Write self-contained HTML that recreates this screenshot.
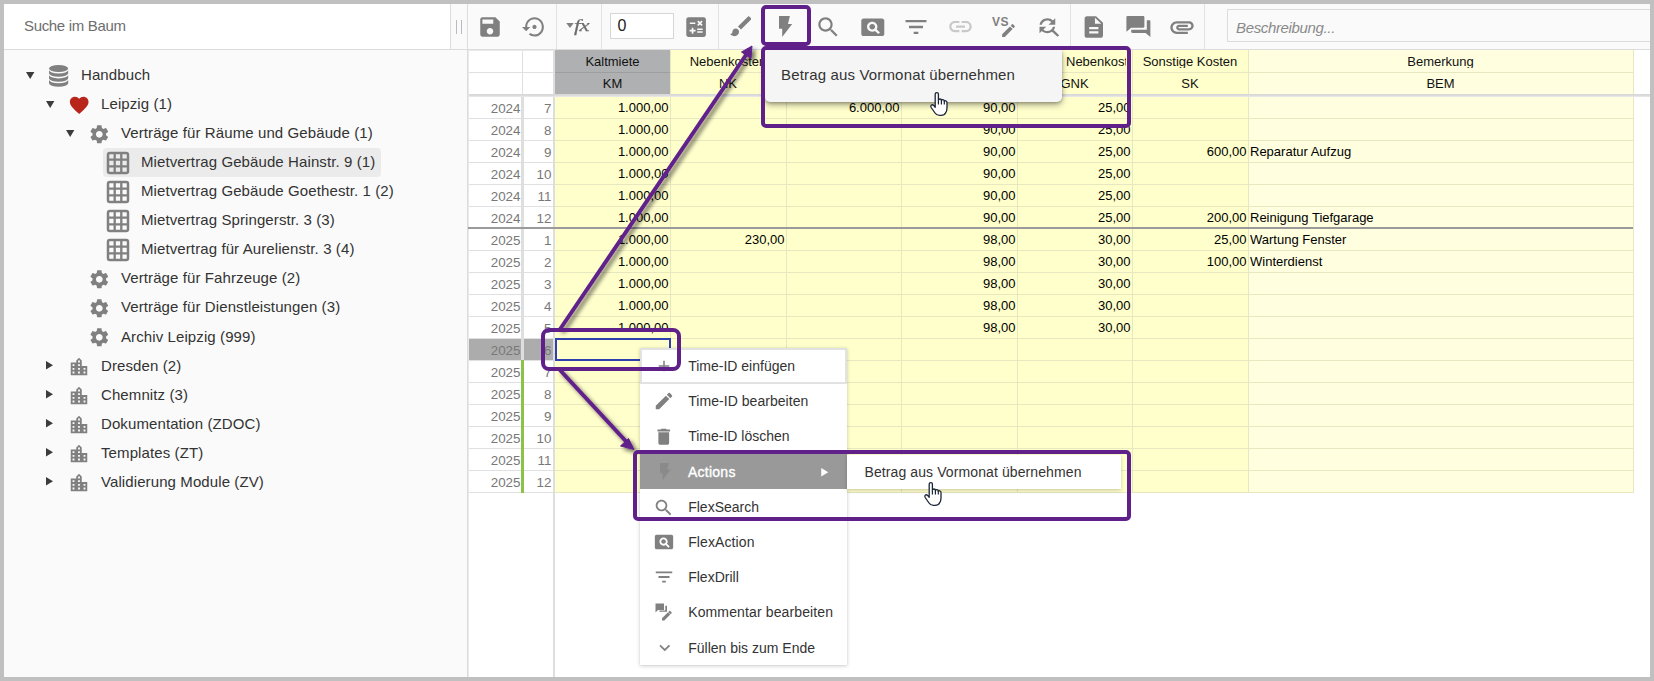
<!DOCTYPE html>
<html lang="de"><head><meta charset="utf-8"><title>Handbuch</title>
<style>
html,body{margin:0;padding:0}
body{width:1654px;height:681px;background:#c0c0c0;position:relative;overflow:hidden;font-family:"Liberation Sans",Arial,sans-serif;}
.abs,.ic,.t,.ln{position:absolute}
.ic{display:block;overflow:visible}
.t{white-space:nowrap;line-height:1}
.tree{font-size:15px;color:#333;letter-spacing:0.1px}
  .rh{font-size:13.400px;color:#787878;text-align:right}
.gh{font-size:13px;color:#111;text-align:center;overflow:hidden}
.gc{font-size:13px;color:#000}
.mi{font-size:14px;color:#333;letter-spacing:0px}
</style></head><body>

<div class="abs" style="left:4px;top:4px;width:1646px;height:673px;background:#fff"></div>
<div class="abs" style="left:4px;top:50px;width:463px;height:627px;background:#fafafa"></div>
<div class="abs" style="left:451px;top:4px;width:1199px;height:45px;background:#fafafa"></div>
<div class="ln" style="left:4px;top:49px;width:1646px;height:1px;background:#dcdcdc"></div>
<div class="ln" style="left:450px;top:4px;width:1px;height:45px;background:#dcdcdc"></div>
<div class="ln" style="left:467px;top:4px;width:1px;height:673px;background:#dcdcdc"></div>
<div class="ln" style="left:456px;top:20px;width:1px;height:14px;background:#b9b9c4"></div>
<div class="ln" style="left:461px;top:20px;width:1px;height:14px;background:#b9b9c4"></div>
<div class="t" style="left:24px;top:18px;font-size:15px;color:#6e6e6e;letter-spacing:-0.33px">Suche im Baum</div>
<svg class="ic" style="left:25.7px;top:71.70px" width="8.400" height="7" viewBox="0 0 12 10"><path d="M0 0h12L6 10z" fill="#3c3c3c"/></svg>
<svg class="ic" style="left:49.40px;top:64.80px" width="19.200" height="22" viewBox="0 0 19.200 22"><ellipse cx="9.600" cy="3.500" rx="9.600" ry="3.500" fill="#808080"/><path fill="#808080" d="M0 5.0A9.600 3.500 0 0 0 19.200 5.0L19.200 8.3A9.600 3.500 0 0 1 0 8.3Z"/><path fill="#808080" d="M0 9.9A9.600 3.500 0 0 0 19.200 9.9L19.200 13.2A9.600 3.500 0 0 1 0 13.2Z"/><path fill="#808080" d="M0 14.8A9.600 3.500 0 0 0 19.200 14.8L19.200 18.3A9.600 3.500 0 0 1 0 18.3Z"/></svg>
<div class="t tree" style="left:81.0px;top:66.90px">Handbuch</div>
<svg class="ic" style="left:45.7px;top:100.77px" width="8.400" height="7" viewBox="0 0 12 10"><path d="M0 0h12L6 10z" fill="#3c3c3c"/></svg>
<svg class="ic" style="left:67.80px;top:93.67px" width="22.4" height="22.4" viewBox="0 0 24 24"><path fill="#b8261b" d="M12 21.350l-1.450-1.320C5.400 15.360 2 12.280 2 8.500 2 5.420 4.420 3 7.500 3c1.740 0 3.410.81 4.500 2.090C13.090 3.810 14.760 3 16.500 3 19.580 3 22 5.420 22 8.500c0 3.780-3.400 6.860-8.550 11.540L12 21.350z"/></svg>
<div class="t tree" style="left:101.0px;top:95.97px">Leipzig (1)</div>
<svg class="ic" style="left:65.7px;top:129.84px" width="8.400" height="7" viewBox="0 0 12 10"><path d="M0 0h12L6 10z" fill="#3c3c3c"/></svg>
<svg class="ic" style="left:87.70px;top:122.64px" width="22.6" height="22.6" viewBox="0 0 24 24"><path fill="#808080" d="M19.140 12.940c.04-.3.06-.61.06-.94 0-.32-.02-.64-.07-.94l2.030-1.580c.18-.14.23-.41.12-.61l-1.920-3.320c-.12-.22-.37-.29-.59-.22l-2.390.96c-.5-.38-1.030-.7-1.620-.94l-.36-2.540c-.04-.24-.24-.41-.48-.41h-3.840c-.24 0-.43.17-.47.41l-.36 2.540c-.59.24-1.130.57-1.620.94l-2.390-.96c-.22-.08-.47 0-.59.22L2.740 8.870c-.12.21-.08.47.12.61l2.030 1.580c-.05.3-.09.63-.09.94s.02.64.07.94l-2.030 1.580c-.18.14-.23.41-.12.61l1.920 3.320c.12.22.37.29.59.22l2.390-.96c.5.38 1.030.7 1.620.94l.36 2.540c.05.24.24.41.48.41h3.840c.24 0 .44-.17.47-.41l.36-2.540c.59-.24 1.130-.56 1.620-.94l2.390.96c.22.08.47 0 .59-.22l1.920-3.320c.12-.22.07-.47-.12-.61l-2.010-1.580zM12 15.600c-1.980 0-3.600-1.620-3.600-3.600s1.620-3.600 3.600-3.600 3.600 1.620 3.600 3.600-1.620 3.600-3.600 3.600z"/></svg>
<div class="t tree" style="left:121.0px;top:125.04px">Verträge für Räume und Gebäude (1)</div>
<div class="abs" style="left:103px;top:148.11px;width:278px;height:28.600px;background:#ebebeb;border-radius:4px"></div>
<svg class="ic" style="left:107.00px;top:152.01px" width="22" height="22" viewBox="0 0 22 22"><rect x="1" y="1" width="20" height="20" rx="1.800" fill="none" stroke="#808080" stroke-width="2.500"/><path d="M7.700 1v20M14.300 1v20M1 7.700h20M1 14.300h20" stroke="#808080" stroke-width="2.300" fill="none"/></svg>
<div class="t tree" style="left:141.0px;top:154.11px">Mietvertrag Gebäude Hainstr. 9 (1)</div>
<svg class="ic" style="left:107.00px;top:181.08px" width="22" height="22" viewBox="0 0 22 22"><rect x="1" y="1" width="20" height="20" rx="1.800" fill="none" stroke="#808080" stroke-width="2.500"/><path d="M7.700 1v20M14.300 1v20M1 7.700h20M1 14.300h20" stroke="#808080" stroke-width="2.300" fill="none"/></svg>
<div class="t tree" style="left:141.0px;top:183.18px">Mietvertrag Gebäude Goethestr. 1 (2)</div>
<svg class="ic" style="left:107.00px;top:210.15px" width="22" height="22" viewBox="0 0 22 22"><rect x="1" y="1" width="20" height="20" rx="1.800" fill="none" stroke="#808080" stroke-width="2.500"/><path d="M7.700 1v20M14.300 1v20M1 7.700h20M1 14.300h20" stroke="#808080" stroke-width="2.300" fill="none"/></svg>
<div class="t tree" style="left:141.0px;top:212.25px">Mietvertrag Springerstr. 3 (3)</div>
<svg class="ic" style="left:107.00px;top:239.22px" width="22" height="22" viewBox="0 0 22 22"><rect x="1" y="1" width="20" height="20" rx="1.800" fill="none" stroke="#808080" stroke-width="2.500"/><path d="M7.700 1v20M14.300 1v20M1 7.700h20M1 14.300h20" stroke="#808080" stroke-width="2.300" fill="none"/></svg>
<div class="t tree" style="left:141.0px;top:241.32px">Mietvertrag für Aurelienstr. 3 (4)</div>
<svg class="ic" style="left:87.70px;top:267.99px" width="22.6" height="22.6" viewBox="0 0 24 24"><path fill="#808080" d="M19.140 12.940c.04-.3.06-.61.06-.94 0-.32-.02-.64-.07-.94l2.030-1.580c.18-.14.23-.41.12-.61l-1.920-3.320c-.12-.22-.37-.29-.59-.22l-2.390.96c-.5-.38-1.030-.7-1.620-.94l-.36-2.540c-.04-.24-.24-.41-.48-.41h-3.840c-.24 0-.43.17-.47.41l-.36 2.540c-.59.24-1.130.57-1.620.94l-2.390-.96c-.22-.08-.47 0-.59.22L2.740 8.870c-.12.21-.08.47.12.61l2.030 1.580c-.05.3-.09.63-.09.94s.02.64.07.94l-2.030 1.580c-.18.14-.23.41-.12.61l1.920 3.320c.12.22.37.29.59.22l2.390-.96c.5.38 1.030.7 1.620.94l.36 2.540c.05.24.24.41.48.41h3.840c.24 0 .44-.17.47-.41l.36-2.540c.59-.24 1.130-.56 1.620-.94l2.390.96c.22.08.47 0 .59-.22l1.920-3.320c.12-.22.07-.47-.12-.61l-2.010-1.580zM12 15.600c-1.980 0-3.600-1.620-3.600-3.600s1.620-3.600 3.600-3.600 3.600 1.620 3.600 3.600-1.620 3.600-3.600 3.600z"/></svg>
<div class="t tree" style="left:121.0px;top:270.39px">Verträge für Fahrzeuge (2)</div>
<svg class="ic" style="left:87.70px;top:297.06px" width="22.6" height="22.6" viewBox="0 0 24 24"><path fill="#808080" d="M19.140 12.940c.04-.3.06-.61.06-.94 0-.32-.02-.64-.07-.94l2.030-1.580c.18-.14.23-.41.12-.61l-1.920-3.320c-.12-.22-.37-.29-.59-.22l-2.390.96c-.5-.38-1.030-.7-1.620-.94l-.36-2.540c-.04-.24-.24-.41-.48-.41h-3.840c-.24 0-.43.17-.47.41l-.36 2.540c-.59.24-1.130.57-1.620.94l-2.390-.96c-.22-.08-.47 0-.59.22L2.740 8.870c-.12.21-.08.47.12.61l2.030 1.580c-.05.3-.09.63-.09.94s.02.64.07.94l-2.030 1.580c-.18.14-.23.41-.12.61l1.920 3.320c.12.22.37.29.59.22l2.390-.96c.5.38 1.030.7 1.620.94l.36 2.540c.05.24.24.41.48.41h3.840c.24 0 .44-.17.47-.41l.36-2.540c.59-.24 1.130-.56 1.620-.94l2.390.96c.22.08.47 0 .59-.22l1.920-3.320c.12-.22.07-.47-.12-.61l-2.010-1.580zM12 15.600c-1.980 0-3.600-1.620-3.600-3.600s1.620-3.600 3.600-3.600 3.600 1.620 3.600 3.600-1.620 3.600-3.600 3.600z"/></svg>
<div class="t tree" style="left:121.0px;top:299.46px">Verträge für Dienstleistungen (3)</div>
<svg class="ic" style="left:87.70px;top:326.13px" width="22.6" height="22.6" viewBox="0 0 24 24"><path fill="#808080" d="M19.140 12.940c.04-.3.06-.61.06-.94 0-.32-.02-.64-.07-.94l2.030-1.580c.18-.14.23-.41.12-.61l-1.920-3.320c-.12-.22-.37-.29-.59-.22l-2.390.96c-.5-.38-1.030-.7-1.620-.94l-.36-2.540c-.04-.24-.24-.41-.48-.41h-3.840c-.24 0-.43.17-.47.41l-.36 2.540c-.59.24-1.130.57-1.620.94l-2.390-.96c-.22-.08-.47 0-.59.22L2.740 8.870c-.12.21-.08.47.12.61l2.030 1.580c-.05.3-.09.63-.09.94s.02.64.07.94l-2.030 1.580c-.18.14-.23.41-.12.61l1.920 3.320c.12.22.37.29.59.22l2.390-.96c.5.38 1.030.7 1.620.94l.36 2.540c.05.24.24.41.48.41h3.840c.24 0 .44-.17.47-.41l.36-2.540c.59-.24 1.130-.56 1.620-.94l2.390.96c.22.08.47 0 .59-.22l1.920-3.320c.12-.22.07-.47-.12-.61l-2.010-1.580zM12 15.600c-1.980 0-3.600-1.620-3.600-3.600s1.620-3.600 3.600-3.600 3.600 1.620 3.600 3.600-1.620 3.600-3.600 3.600z"/></svg>
<div class="t tree" style="left:121.0px;top:328.53px">Archiv Leipzig (999)</div>
<svg class="ic" style="left:46.2px;top:361.20px" width="7" height="8.400" viewBox="0 0 10 12"><path d="M0 0v12L10 6z" fill="#3c3c3c"/></svg>
<svg class="ic" style="left:68.00px;top:355.50px" width="22" height="22" viewBox="0 0 24 24"><path fill="#808080" d="M15 11V5l-3-3-3 3v2H3v14h18V11h-6zm-8 8H5v-2h2v2zm0-4H5v-2h2v2zm0-4H5V9h2v2zm6 8h-2v-2h2v2zm0-4h-2v-2h2v2zm0-4h-2V9h2v2zm0-4h-2V5h2v2zm6 12h-2v-2h2v2zm0-4h-2v-2h2v2z"/></svg>
<div class="t tree" style="left:101.0px;top:357.60px">Dresden (2)</div>
<svg class="ic" style="left:46.2px;top:390.27px" width="7" height="8.400" viewBox="0 0 10 12"><path d="M0 0v12L10 6z" fill="#3c3c3c"/></svg>
<svg class="ic" style="left:68.00px;top:384.57px" width="22" height="22" viewBox="0 0 24 24"><path fill="#808080" d="M15 11V5l-3-3-3 3v2H3v14h18V11h-6zm-8 8H5v-2h2v2zm0-4H5v-2h2v2zm0-4H5V9h2v2zm6 8h-2v-2h2v2zm0-4h-2v-2h2v2zm0-4h-2V9h2v2zm0-4h-2V5h2v2zm6 12h-2v-2h2v2zm0-4h-2v-2h2v2z"/></svg>
<div class="t tree" style="left:101.0px;top:386.67px">Chemnitz (3)</div>
<svg class="ic" style="left:46.2px;top:419.34px" width="7" height="8.400" viewBox="0 0 10 12"><path d="M0 0v12L10 6z" fill="#3c3c3c"/></svg>
<svg class="ic" style="left:68.00px;top:413.64px" width="22" height="22" viewBox="0 0 24 24"><path fill="#808080" d="M15 11V5l-3-3-3 3v2H3v14h18V11h-6zm-8 8H5v-2h2v2zm0-4H5v-2h2v2zm0-4H5V9h2v2zm6 8h-2v-2h2v2zm0-4h-2v-2h2v2zm0-4h-2V9h2v2zm0-4h-2V5h2v2zm6 12h-2v-2h2v2zm0-4h-2v-2h2v2z"/></svg>
<div class="t tree" style="left:101.0px;top:415.74px">Dokumentation (ZDOC)</div>
<svg class="ic" style="left:46.2px;top:448.41px" width="7" height="8.400" viewBox="0 0 10 12"><path d="M0 0v12L10 6z" fill="#3c3c3c"/></svg>
<svg class="ic" style="left:68.00px;top:442.71px" width="22" height="22" viewBox="0 0 24 24"><path fill="#808080" d="M15 11V5l-3-3-3 3v2H3v14h18V11h-6zm-8 8H5v-2h2v2zm0-4H5v-2h2v2zm0-4H5V9h2v2zm6 8h-2v-2h2v2zm0-4h-2v-2h2v2zm0-4h-2V9h2v2zm0-4h-2V5h2v2zm6 12h-2v-2h2v2zm0-4h-2v-2h2v2z"/></svg>
<div class="t tree" style="left:101.0px;top:444.81px">Templates (ZT)</div>
<svg class="ic" style="left:46.2px;top:477.48px" width="7" height="8.400" viewBox="0 0 10 12"><path d="M0 0v12L10 6z" fill="#3c3c3c"/></svg>
<svg class="ic" style="left:68.00px;top:471.78px" width="22" height="22" viewBox="0 0 24 24"><path fill="#808080" d="M15 11V5l-3-3-3 3v2H3v14h18V11h-6zm-8 8H5v-2h2v2zm0-4H5v-2h2v2zm0-4H5V9h2v2zm6 8h-2v-2h2v2zm0-4h-2v-2h2v2zm0-4h-2V9h2v2zm0-4h-2V5h2v2zm6 12h-2v-2h2v2zm0-4h-2v-2h2v2z"/></svg>
<div class="t tree" style="left:101.0px;top:473.88px">Validierung Module (ZV)</div>
<svg class="ic" style="left:476.80px;top:13.70px" width="26" height="26" viewBox="0 0 24 24"><path fill="#808080" d="M17 3H5c-1.11 0-2 .9-2 2v14c0 1.1.89 2 2 2h14c1.1 0 2-.9 2-2V7l-4-4zm-5 16c-1.66 0-3-1.34-3-3s1.34-3 3-3 3 1.34 3 3-1.34 3-3 3zm3-10H5V5h10v4z"/></svg>
<svg class="ic" style="left:521.70px;top:13.80px" width="25" height="25.8" viewBox="0 0 24 24" preserveAspectRatio="none"><path fill="#808080" d="M14 12c0-1.1-.9-2-2-2s-2 .9-2 2 .9 2 2 2 2-.9 2-2zm-2-9c-4.97 0-9 4.03-9 9H0l4 4 4-4H5c0-3.87 3.13-7 7-7s7 3.13 7 7-3.13 7-7 7c-1.51 0-2.91-.49-4.06-1.3l-1.42 1.44C8.04 20.3 9.94 21 12 21c4.97 0 9-4.03 9-9s-4.03-9-9-9z"/></svg>
<div class="ln" style="left:556px;top:4px;width:1px;height:45px;background:#e2e2e2"></div>
<svg class="ic" style="left:566px;top:23px" width="8" height="5" viewBox="0 0 12 8"><path d="M0 0h12L6 8z" fill="#808080"/></svg>
<div class="t" style="left:574.200px;top:16.500px;font-family:'Liberation Serif','DejaVu Serif',serif;font-style:italic;font-size:17.500px;color:#6a6a6a;-webkit-text-stroke:0.250px #6a6a6a;letter-spacing:-0.600px;transform:scaleX(1.3);transform-origin:0 0">fx</div>
<div class="ln" style="left:601px;top:4px;width:1px;height:45px;background:#e2e2e2"></div>
<div class="abs" style="left:610px;top:13px;width:62px;height:24px;border:1px solid #d6d6d6;background:#fff"></div>
<div class="t" style="left:617.500px;top:18px;font-size:16px;color:#222">0</div>
<svg class="ic" style="left:683.40px;top:13.60px" width="26.2" height="26.2" viewBox="0 0 24 24"><path fill="#808080" d="M19 3H5c-1.100 0-2 .9-2 2v14c0 1.100.9 2 2 2h14c1.100 0 2-.9 2-2V5c0-1.100-.9-2-2-2zm-5.970 4.060L14.090 6l1.410 1.410L16.910 6l1.060 1.060-1.410 1.410 1.410 1.410-1.060 1.060-1.410-1.400-1.410 1.410-1.060-1.060 1.410-1.410-1.410-1.420zm-6.780.66h5v1.500h-5v-1.500zM11.500 16h-2v2H8v-2H6v-1.500h2v-2h1.500v2h2V16zm6.500 1.250h-5v-1.500h5v1.500zm0-2.500h-5v-1.500h5v1.500z"/></svg>
<div class="ln" style="left:718px;top:4px;width:1px;height:45px;background:#e2e2e2"></div>
<svg class="ic" style="left:727.95px;top:13.45px" width="26.5" height="26.5" viewBox="0 0 24 24"><path fill="#808080" d="M7 14c-1.660 0-3 1.340-3 3 0 1.310-1.160 2-2 2 .92 1.220 2.490 2 4 2 2.210 0 4-1.790 4-4 0-1.660-1.340-3-3-3zm13.710-9.370l-1.340-1.340c-.39-.39-1.020-.39-1.410 0L9 12.250 11.750 15l8.960-8.960c.39-.39.39-1.020 0-1.410z"/></svg>
<svg class="ic" style="left:779.00px;top:16.00px" width="13.20" height="21.10" viewBox="0 0 13.200 21.100"><path fill="#808080" d="M0 0H10.900L9 7.900H13.200L3.200 21.100V12.700H0Z"/></svg>
<svg class="ic" style="left:814.55px;top:13.85px" width="26.5" height="26.5" viewBox="0 0 24 24"><path fill="#808080" d="M15.5 14h-.79l-.28-.27C15.41 12.59 16 11.11 16 9.5 16 5.91 13.09 3 9.5 3S3 5.91 3 9.5 5.91 16 9.5 16c1.61 0 3.09-.59 4.23-1.57l.27.28v.79l5 4.99L20.49 19l-4.99-5zm-6 0C7.01 14 5 11.99 5 9.5S7.01 5 9.5 5 14 7.01 14 9.5 11.99 14 9.5 14z"/></svg>
<svg class="ic" style="left:858.70px;top:13.85px" width="27.6" height="26.5" viewBox="0 0 24 24" preserveAspectRatio="none"><path fill="#808080" d="M11.5 9C10.12 9 9 10.12 9 11.5s1.12 2.5 2.5 2.5 2.5-1.12 2.5-2.5S12.88 9 11.5 9zM20 4H4c-1.1 0-2 .9-2 2v12c0 1.1.9 2 2 2h16c1.1 0 2-.9 2-2V6c0-1.1-.9-2-2-2zm-3.21 14.21l-2.91-2.91c-.69.44-1.51.7-2.39.7C9.01 16 7 13.99 7 11.5S9.01 7 11.5 7 16 9.01 16 11.5c0 .88-.26 1.69-.7 2.39l2.91 2.9-1.42 1.42z"/></svg>
<svg class="ic" style="left:902.30px;top:12.70px" width="28" height="28" viewBox="0 0 24 24"><path fill="#808080" d="M10 18h4v-2h-4v2zM3 6v2h18V6H3zm3 7h12v-2H6v2z"/></svg>
<svg class="ic" style="left:946.80px;top:12.70px" width="27" height="27" viewBox="0 0 24 24"><path fill="#c9c9c9" d="M3.9 12c0-1.71 1.39-3.1 3.1-3.1h4V7H7c-2.76 0-5 2.24-5 5s2.24 5 5 5h4v-1.900H7c-1.71 0-3.1-1.39-3.1-3.1zM8 13h8v-2H8v2zm9-6h-4v1.900h4c1.71 0 3.1 1.39 3.1 3.1s-1.39 3.1-3.1 3.1h-4V17h4c2.76 0 5-2.24 5-5s-2.24-5-5-5z"/></svg>
<div class="t" style="left:992px;top:15.500px;font-size:12px;font-weight:bold;color:#808080;letter-spacing:0.5px">VS</div>
<svg class="ic" style="left:1000.00px;top:21.50px" width="17" height="17" viewBox="0 0 24 24"><path fill="#808080" d="M3 17.25V21h3.750L17.81 9.94l-3.750-3.750L3 17.25zM20.71 7.04c.39-.39.39-1.02 0-1.41l-2.34-2.34c-.39-.39-1.02-.39-1.41 0l-1.83 1.83 3.750 3.750 1.830-1.830z"/></svg>
<svg class="ic" style="left:1034.90px;top:14.05px" width="27" height="25.5" viewBox="0 0 24 24" preserveAspectRatio="none"><path fill="#808080" d="M11 6c1.380 0 2.630.56 3.540 1.460L12 10h6V4l-2.050 2.050C14.680 4.780 12.930 4 11 4c-3.530 0-6.430 2.610-6.920 6H6.100c.46-2.280 2.480-4 4.900-4zm5.640 9.140c.66-.9 1.120-1.970 1.280-3.140H15.900c-.46 2.280-2.480 4-4.900 4-1.380 0-2.630-.56-3.540-1.460L10 12H4v6l2.050-2.050C7.320 17.220 9.070 18 11 18c1.550 0 2.980-.51 4.140-1.360L20 21.490 21.490 20l-4.850-4.860z"/></svg>
<div class="ln" style="left:1070px;top:4px;width:1px;height:45px;background:#e2e2e2"></div>
<svg class="ic" style="left:1079.90px;top:13.80px" width="27.6" height="26" viewBox="0 0 24 24" preserveAspectRatio="none"><path fill="#808080" d="M14 2H6c-1.100 0-1.990.9-1.990 2L4 20c0 1.100.890 2 1.990 2H18c1.100 0 2-.9 2-2V8l-6-6zm2 16H8v-2h8v2zm0-4H8v-2h8v2zm-3-5V3.500L18.500 9H13z"/></svg>
<svg class="ic" style="left:1123.60px;top:13.90px" width="28.8" height="25.2" viewBox="0 0 24 24" preserveAspectRatio="none"><path fill="#808080" d="M21 6h-2v9H6v2c0 .55.45 1 1 1h11l4 4V7c0-.55-.45-1-1-1zm-4 6V3c0-.55-.45-1-1-1H3c-.55 0-1 .45-1 1v14l4-4h10c.55 0 1-.45 1-1z"/></svg>
<svg class="ic" style="left:1168.40px;top:13.20px" width="28" height="28" viewBox="0 0 24 24"><path fill="#808080" d="M2 12.500C2 9.460 4.460 7 7.500 7H18c2.210 0 4 1.790 4 4s-1.790 4-4 4H9.500C8.120 15 7 13.880 7 12.500S8.120 10 9.500 10H17v2H9.410c-.55 0-.55 1 0 1H18c1.100 0 2-.9 2-2s-.9-2-2-2H7.500C5.570 9 4 10.570 4 12.500S5.570 16 7.500 16H17v2H7.500C4.460 18 2 15.540 2 12.500z"/></svg>
<div class="ln" style="left:1204px;top:4px;width:1px;height:45px;background:#e2e2e2"></div>
<div class="abs" style="left:1227px;top:9px;width:422px;height:31px;border:1px solid #dcdcdc;border-right:none;background:#fafafa"></div>
<div class="t" style="left:1236px;top:19.500px;font-size:15px;font-style:italic;color:#8a8a8a;letter-spacing:-0.35px">Beschreibung...</div>
<div class="abs" style="left:468px;top:50px;width:87px;height:443px;background:#fff"></div>
<div class="abs" style="left:555px;top:50px;width:693px;height:443px;background:#ffffcc"></div>
<div class="abs" style="left:1248px;top:50px;width:385px;height:443px;background:#ffffe0"></div>
<div class="abs" style="left:555px;top:50px;width:115px;height:44px;background:#afb0b2"></div>
<div class="abs" style="left:468px;top:338px;width:87px;height:22px;background:#acacac"></div>
<div class="ln" style="left:468px;top:72px;width:87px;height:1px;background:#e0e0e0"></div>
<div class="ln" style="left:555px;top:72px;width:115px;height:1px;background:#9e9e9e"></div>
<div class="ln" style="left:670px;top:72px;width:963px;height:1px;background:#e7e7c0"></div>
<div class="ln" style="left:468px;top:118px;width:87px;height:1px;background:#e0e0e0"></div>
<div class="ln" style="left:555px;top:118px;width:1078px;height:1px;background:#e7e7c0"></div>
<div class="ln" style="left:468px;top:140px;width:87px;height:1px;background:#e0e0e0"></div>
<div class="ln" style="left:555px;top:140px;width:1078px;height:1px;background:#e7e7c0"></div>
<div class="ln" style="left:468px;top:162px;width:87px;height:1px;background:#e0e0e0"></div>
<div class="ln" style="left:555px;top:162px;width:1078px;height:1px;background:#e7e7c0"></div>
<div class="ln" style="left:468px;top:184px;width:87px;height:1px;background:#e0e0e0"></div>
<div class="ln" style="left:555px;top:184px;width:1078px;height:1px;background:#e7e7c0"></div>
<div class="ln" style="left:468px;top:206px;width:87px;height:1px;background:#e0e0e0"></div>
<div class="ln" style="left:555px;top:206px;width:1078px;height:1px;background:#e7e7c0"></div>
<div class="ln" style="left:468px;top:228px;width:87px;height:1px;background:#e0e0e0"></div>
<div class="ln" style="left:555px;top:228px;width:1078px;height:1px;background:#e7e7c0"></div>
<div class="ln" style="left:468px;top:250px;width:87px;height:1px;background:#e0e0e0"></div>
<div class="ln" style="left:555px;top:250px;width:1078px;height:1px;background:#e7e7c0"></div>
<div class="ln" style="left:468px;top:272px;width:87px;height:1px;background:#e0e0e0"></div>
<div class="ln" style="left:555px;top:272px;width:1078px;height:1px;background:#e7e7c0"></div>
<div class="ln" style="left:468px;top:294px;width:87px;height:1px;background:#e0e0e0"></div>
<div class="ln" style="left:555px;top:294px;width:1078px;height:1px;background:#e7e7c0"></div>
<div class="ln" style="left:468px;top:316px;width:87px;height:1px;background:#e0e0e0"></div>
<div class="ln" style="left:555px;top:316px;width:1078px;height:1px;background:#e7e7c0"></div>
<div class="ln" style="left:468px;top:338px;width:87px;height:1px;background:#e0e0e0"></div>
<div class="ln" style="left:555px;top:338px;width:1078px;height:1px;background:#e7e7c0"></div>
<div class="ln" style="left:468px;top:360px;width:87px;height:1px;background:#e0e0e0"></div>
<div class="ln" style="left:555px;top:360px;width:1078px;height:1px;background:#e7e7c0"></div>
<div class="ln" style="left:468px;top:382px;width:87px;height:1px;background:#e0e0e0"></div>
<div class="ln" style="left:555px;top:382px;width:1078px;height:1px;background:#e7e7c0"></div>
<div class="ln" style="left:468px;top:404px;width:87px;height:1px;background:#e0e0e0"></div>
<div class="ln" style="left:555px;top:404px;width:1078px;height:1px;background:#e7e7c0"></div>
<div class="ln" style="left:468px;top:426px;width:87px;height:1px;background:#e0e0e0"></div>
<div class="ln" style="left:555px;top:426px;width:1078px;height:1px;background:#e7e7c0"></div>
<div class="ln" style="left:468px;top:448px;width:87px;height:1px;background:#e0e0e0"></div>
<div class="ln" style="left:555px;top:448px;width:1078px;height:1px;background:#e7e7c0"></div>
<div class="ln" style="left:468px;top:470px;width:87px;height:1px;background:#e0e0e0"></div>
<div class="ln" style="left:555px;top:470px;width:1078px;height:1px;background:#e7e7c0"></div>
<div class="ln" style="left:468px;top:492px;width:87px;height:1px;background:#e0e0e0"></div>
<div class="ln" style="left:555px;top:492px;width:1078px;height:1px;background:#e7e7c0"></div>
<div class="ln" style="left:670px;top:50px;width:1px;height:443px;background:#e7e7c0"></div>
<div class="ln" style="left:786px;top:50px;width:1px;height:443px;background:#e7e7c0"></div>
<div class="ln" style="left:901px;top:50px;width:1px;height:443px;background:#e7e7c0"></div>
<div class="ln" style="left:1017px;top:50px;width:1px;height:443px;background:#e7e7c0"></div>
<div class="ln" style="left:1132px;top:50px;width:1px;height:443px;background:#e7e7c0"></div>
<div class="ln" style="left:1248px;top:50px;width:1px;height:443px;background:#e7e7c0"></div>
<div class="ln" style="left:1633px;top:50px;width:1px;height:443px;background:#e7e7c0"></div>
<div class="ln" style="left:522px;top:50px;width:1px;height:45px;background:#e0e0e0"></div>
<div class="ln" style="left:521px;top:97px;width:3px;height:396px;background:#dedede"></div>
<div class="ln" style="left:553px;top:50px;width:2px;height:627px;background:#dedede"></div>
<div class="ln" style="left:521px;top:360px;width:3px;height:133px;background:#8bc34a"></div>
<div class="ln" style="left:468px;top:94px;width:1182px;height:3px;background:linear-gradient(#d6d6d6,#dcdcdc 50%,#ececec)"></div>
<div class="ln" style="left:468px;top:50px;width:1px;height:627px;background:#e9e9e9"></div>
<div class="ln" style="left:468px;top:50px;width:87px;height:1px;background:#e9e9e9"></div>
<div class="ln" style="left:468px;top:227px;width:1165px;height:2px;background:#9a9a9a"></div>
<div class="t gh" style="left:555px;width:115px;top:55px">Kaltmiete</div>
<div class="t gh" style="left:555px;width:115px;top:77px">KM</div>
<div class="t gh" style="left:670px;width:116px;top:55px">Nebenkosten</div>
<div class="t gh" style="left:670px;width:116px;top:77px">NK</div>
<div class="t gh" style="left:1066px;width:60px;top:55px;text-align:left">Nebenkosten</div>
<div class="t gh" style="left:1017px;width:115px;top:77px">GNK</div>
<div class="t gh" style="left:1132px;width:116px;top:55px">Sonstige Kosten</div>
<div class="t gh" style="left:1132px;width:116px;top:77px">SK</div>
<div class="t gh" style="left:1248px;width:385px;top:55px">Bemerkung</div>
<div class="t gh" style="left:1248px;width:385px;top:77px">BEM</div>
<div class="t rh" style="left:468px;width:52.500px;top:101.6px">2024</div>
<div class="t rh" style="left:524px;width:27.500px;top:101.6px">7</div>
<div class="t gc" style="left:555px;width:113.5px;text-align:right;top:100.5px">1.000,00</div>
<div class="t gc" style="left:786px;width:113.5px;text-align:right;top:100.5px">6.000,00</div>
<div class="t gc" style="left:901px;width:114.5px;text-align:right;top:100.5px">90,00</div>
<div class="t gc" style="left:1017px;width:113.5px;text-align:right;top:100.5px">25,00</div>
<div class="t rh" style="left:468px;width:52.500px;top:123.6px">2024</div>
<div class="t rh" style="left:524px;width:27.500px;top:123.6px">8</div>
<div class="t gc" style="left:555px;width:113.5px;text-align:right;top:122.5px">1.000,00</div>
<div class="t gc" style="left:901px;width:114.5px;text-align:right;top:122.5px">90,00</div>
<div class="t gc" style="left:1017px;width:113.5px;text-align:right;top:122.5px">25,00</div>
<div class="t rh" style="left:468px;width:52.500px;top:145.6px">2024</div>
<div class="t rh" style="left:524px;width:27.500px;top:145.6px">9</div>
<div class="t gc" style="left:555px;width:113.5px;text-align:right;top:144.5px">1.000,00</div>
<div class="t gc" style="left:901px;width:114.5px;text-align:right;top:144.5px">90,00</div>
<div class="t gc" style="left:1017px;width:113.5px;text-align:right;top:144.5px">25,00</div>
<div class="t gc" style="left:1132px;width:114.5px;text-align:right;top:144.5px">600,00</div>
<div class="t gc" style="left:1250px;top:144.5px">Reparatur Aufzug</div>
<div class="t rh" style="left:468px;width:52.500px;top:167.6px">2024</div>
<div class="t rh" style="left:524px;width:27.500px;top:167.6px">10</div>
<div class="t gc" style="left:555px;width:113.5px;text-align:right;top:166.5px">1.000,00</div>
<div class="t gc" style="left:901px;width:114.5px;text-align:right;top:166.5px">90,00</div>
<div class="t gc" style="left:1017px;width:113.5px;text-align:right;top:166.5px">25,00</div>
<div class="t rh" style="left:468px;width:52.500px;top:189.6px">2024</div>
<div class="t rh" style="left:524px;width:27.500px;top:189.6px">11</div>
<div class="t gc" style="left:555px;width:113.5px;text-align:right;top:188.5px">1.000,00</div>
<div class="t gc" style="left:901px;width:114.5px;text-align:right;top:188.5px">90,00</div>
<div class="t gc" style="left:1017px;width:113.5px;text-align:right;top:188.5px">25,00</div>
<div class="t rh" style="left:468px;width:52.500px;top:211.6px">2024</div>
<div class="t rh" style="left:524px;width:27.500px;top:211.6px">12</div>
<div class="t gc" style="left:555px;width:113.5px;text-align:right;top:210.5px">1.000,00</div>
<div class="t gc" style="left:901px;width:114.5px;text-align:right;top:210.5px">90,00</div>
<div class="t gc" style="left:1017px;width:113.5px;text-align:right;top:210.5px">25,00</div>
<div class="t gc" style="left:1132px;width:114.5px;text-align:right;top:210.5px">200,00</div>
<div class="t gc" style="left:1250px;top:210.5px">Reinigung Tiefgarage</div>
<div class="t rh" style="left:468px;width:52.500px;top:233.6px">2025</div>
<div class="t rh" style="left:524px;width:27.500px;top:233.6px">1</div>
<div class="t gc" style="left:555px;width:113.5px;text-align:right;top:232.5px">1.000,00</div>
<div class="t gc" style="left:670px;width:114.5px;text-align:right;top:232.5px">230,00</div>
<div class="t gc" style="left:901px;width:114.5px;text-align:right;top:232.5px">98,00</div>
<div class="t gc" style="left:1017px;width:113.5px;text-align:right;top:232.5px">30,00</div>
<div class="t gc" style="left:1132px;width:114.5px;text-align:right;top:232.5px">25,00</div>
<div class="t gc" style="left:1250px;top:232.5px">Wartung Fenster</div>
<div class="t rh" style="left:468px;width:52.500px;top:255.6px">2025</div>
<div class="t rh" style="left:524px;width:27.500px;top:255.6px">2</div>
<div class="t gc" style="left:555px;width:113.5px;text-align:right;top:254.5px">1.000,00</div>
<div class="t gc" style="left:901px;width:114.5px;text-align:right;top:254.5px">98,00</div>
<div class="t gc" style="left:1017px;width:113.5px;text-align:right;top:254.5px">30,00</div>
<div class="t gc" style="left:1132px;width:114.5px;text-align:right;top:254.5px">100,00</div>
<div class="t gc" style="left:1250px;top:254.5px">Winterdienst</div>
<div class="t rh" style="left:468px;width:52.500px;top:277.6px">2025</div>
<div class="t rh" style="left:524px;width:27.500px;top:277.6px">3</div>
<div class="t gc" style="left:555px;width:113.5px;text-align:right;top:276.5px">1.000,00</div>
<div class="t gc" style="left:901px;width:114.5px;text-align:right;top:276.5px">98,00</div>
<div class="t gc" style="left:1017px;width:113.5px;text-align:right;top:276.5px">30,00</div>
<div class="t rh" style="left:468px;width:52.500px;top:299.6px">2025</div>
<div class="t rh" style="left:524px;width:27.500px;top:299.6px">4</div>
<div class="t gc" style="left:555px;width:113.5px;text-align:right;top:298.5px">1.000,00</div>
<div class="t gc" style="left:901px;width:114.5px;text-align:right;top:298.5px">98,00</div>
<div class="t gc" style="left:1017px;width:113.5px;text-align:right;top:298.5px">30,00</div>
<div class="t rh" style="left:468px;width:52.500px;top:321.6px">2025</div>
<div class="t rh" style="left:524px;width:27.500px;top:321.6px">5</div>
<div class="t gc" style="left:555px;width:113.5px;text-align:right;top:320.5px">1.000,00</div>
<div class="t gc" style="left:901px;width:114.5px;text-align:right;top:320.5px">98,00</div>
<div class="t gc" style="left:1017px;width:113.5px;text-align:right;top:320.5px">30,00</div>
<div class="t rh" style="left:468px;width:52.500px;top:343.6px">2025</div>
<div class="t rh" style="left:524px;width:27.500px;top:343.6px">6</div>
<div class="t rh" style="left:468px;width:52.500px;top:365.6px">2025</div>
<div class="t rh" style="left:524px;width:27.500px;top:365.6px">7</div>
<div class="t rh" style="left:468px;width:52.500px;top:387.6px">2025</div>
<div class="t rh" style="left:524px;width:27.500px;top:387.6px">8</div>
<div class="t rh" style="left:468px;width:52.500px;top:409.6px">2025</div>
<div class="t rh" style="left:524px;width:27.500px;top:409.6px">9</div>
<div class="t rh" style="left:468px;width:52.500px;top:431.6px">2025</div>
<div class="t rh" style="left:524px;width:27.500px;top:431.6px">10</div>
<div class="t rh" style="left:468px;width:52.500px;top:453.6px">2025</div>
<div class="t rh" style="left:524px;width:27.500px;top:453.6px">11</div>
<div class="t rh" style="left:468px;width:52.500px;top:475.6px">2025</div>
<div class="t rh" style="left:524px;width:27.500px;top:475.6px">12</div>
<div class="abs" style="left:555px;top:338px;width:112px;height:19px;border:2px solid #2e40b0"></div>
<div class="abs" style="left:765px;top:50px;width:297px;height:52px;background:#f5f5f5;border-radius:0 0 5px 5px;box-shadow:0 3px 6px rgba(0,0,0,0.35),0 1px 3px rgba(0,0,0,0.2)"></div>
<div class="t" style="left:781px;top:66.700px;font-size:15px;color:#333;letter-spacing:0.16px">Betrag aus Vormonat übernehmen</div>
<div class="abs" style="left:640px;top:348.4px;width:207px;height:316.8px;background:#fff;box-shadow:0 1px 4px rgba(0,0,0,0.2),0 0 1px rgba(0,0,0,0.1)"></div>
<div class="abs" style="left:640px;top:348.4px;width:203px;height:31.2px;border:2px solid #e2e2e2;background:#fff"></div>
<div class="abs" style="left:640px;top:454.0px;width:207px;height:35.2px;background:#999"></div>
<div class="abs" style="left:847px;top:454.500px;width:273.500px;height:34.500px;background:#fff;box-shadow:0 2px 4px rgba(0,0,0,0.16),0 0 2px rgba(0,0,0,0.08)"></div>
<div class="t mi" style="left:864.500px;top:465px;letter-spacing:0.1px">Betrag aus Vormonat übernehmen</div>
<svg class="ic" style="left:655.00px;top:357.00px" width="18" height="18" viewBox="0 0 24 24"><path fill="#808080" d="M19 13h-6v6h-2v-6H5v-2h6V5h2v6h6v2z"/></svg>
<div class="t mi" style="left:688.200px;top:358.80px;letter-spacing:0px">Time-ID einfügen</div>
<svg class="ic" style="left:653.00px;top:390.20px" width="22" height="22" viewBox="0 0 24 24"><path fill="#808080" d="M3 17.25V21h3.750L17.81 9.94l-3.750-3.750L3 17.25zM20.71 7.04c.39-.39.39-1.02 0-1.41l-2.34-2.34c-.39-.39-1.02-.39-1.41 0l-1.83 1.83 3.750 3.750 1.830-1.830z"/></svg>
<div class="t mi" style="left:688.200px;top:394.00px;letter-spacing:0.05px">Time-ID bearbeiten</div>
<svg class="ic" style="left:653.25px;top:425.65px" width="21.5" height="21.5" viewBox="0 0 24 24"><path fill="#808080" d="M6 19c0 1.1.9 2 2 2h8c1.1 0 2-.9 2-2V7H6v12zM19 4h-3.500l-1-1h-5l-1 1H5v2h14V4z"/></svg>
<div class="t mi" style="left:688.200px;top:429.20px;letter-spacing:0px">Time-ID löschen</div>
<svg class="ic" style="left:659.60px;top:463.00px" width="10.69" height="17.09" viewBox="0 0 13.200 21.100"><path fill="#8a8a8a" d="M0 0H10.900L9 7.900H13.200L3.200 21.100V12.700H0Z"/></svg>
<div class="t mi" style="left:688px;top:465.20px;color:#fff;-webkit-text-stroke:0.350px #fff;letter-spacing:0.25px">Actions</div>
<svg class="ic" style="left:821px;top:467.60px" width="7.500" height="8.400" viewBox="0 0 10 12"><path d="M0 0v12L10 6z" fill="#fff"/></svg>
<svg class="ic" style="left:653.25px;top:496.55px" width="21.5" height="21.5" viewBox="0 0 24 24"><path fill="#808080" d="M15.5 14h-.79l-.28-.27C15.41 12.59 16 11.11 16 9.5 16 5.91 13.09 3 9.5 3S3 5.91 3 9.5 5.91 16 9.5 16c1.61 0 3.09-.59 4.23-1.57l.27.28v.79l5 4.99L20.49 19l-4.99-5zm-6 0C7.01 14 5 11.99 5 9.5S7.01 5 9.5 5 14 7.01 14 9.5 11.99 14 9.5 14z"/></svg>
<div class="t mi" style="left:688.200px;top:499.60px;letter-spacing:0px">FlexSearch</div>
<svg class="ic" style="left:653.00px;top:531.00px" width="22" height="22" viewBox="0 0 24 24"><path fill="#808080" d="M11.5 9C10.12 9 9 10.12 9 11.5s1.12 2.5 2.5 2.5 2.5-1.12 2.5-2.5S12.88 9 11.5 9zM20 4H4c-1.1 0-2 .9-2 2v12c0 1.1.9 2 2 2h16c1.1 0 2-.9 2-2V6c0-1.1-.9-2-2-2zm-3.21 14.21l-2.91-2.91c-.69.44-1.51.7-2.39.7C9.01 16 7 13.99 7 11.5S9.01 7 11.5 7 16 9.01 16 11.5c0 .88-.26 1.69-.7 2.39l2.91 2.9-1.42 1.42z"/></svg>
<div class="t mi" style="left:688.200px;top:534.80px;letter-spacing:0.1px">FlexAction</div>
<svg class="ic" style="left:653.00px;top:566.20px" width="22" height="22" viewBox="0 0 24 24"><path fill="#808080" d="M10 18h4v-2h-4v2zM3 6v2h18V6H3zm3 7h12v-2H6v2z"/></svg>
<div class="t mi" style="left:688.200px;top:570.00px;letter-spacing:0px">FlexDrill</div>
<svg class="ic" style="left:655.00px;top:603.40px" width="18" height="18" viewBox="0 0 18 18"><path fill="#808080" d="M0.500 0.500h8.500v6.500h-6l-2.500 2.500z M10.300 2.800h1.700v6h-7.600v-1.200h5.900z"/><path fill="#808080" d="M7 15.200V17.500h2.300l6-6-2.300-2.300z M16.600 10.200c.25-.25.25-.65 0-.9l-1.400-1.400c-.25-.25-.65-.25-.9 0l-1 1 2.300 2.300z"/></svg>
<div class="t mi" style="left:688.200px;top:605.20px;letter-spacing:0.13px">Kommentar bearbeiten</div>
<svg class="ic" style="left:653.65px;top:637.15px" width="21.5" height="21.5" viewBox="0 0 24 24"><path fill="#808080" d="M16.590 8.590L12 13.170 7.410 8.590 6 10l6 6 6-6z"/></svg>
<div class="t mi" style="left:688.200px;top:641.30px;letter-spacing:0px">Füllen bis zum Ende</div>
<svg class="ic" style="left:0;top:0" width="1654" height="681" viewBox="0 0 1654 681">
<defs><filter id="sh" x="-20%" y="-20%" width="150%" height="150%"><feGaussianBlur in="SourceAlpha" stdDeviation="2.200"/><feOffset dx="3" dy="3"/><feComponentTransfer><feFuncA type="linear" slope="0.55"/></feComponentTransfer><feMerge><feMergeNode/><feMergeNode in="SourceGraphic"/></feMerge></filter></defs>
<g filter="url(#sh)" stroke="#60208a" fill="#60208a">
<path d="M559.500 330L747.300 53" stroke-width="4" fill="none"/>
<path d="M752 46L751 58.500L741.500 52Z" stroke-width="1"/>
<path d="M559 369L628 443.500" stroke-width="4" fill="none"/>
<path d="M634 449.500L620.500 446L628.500 438.500Z" stroke-width="1"/>
</g></svg>
<div class="abs" style="left:761px;top:5px;width:42px;height:33px;border:4px solid #60208a;border-radius:5px"></div>
<div class="abs" style="left:761px;top:46px;width:362px;height:74px;border:4px solid #60208a;border-radius:5px"></div>
<div class="abs" style="left:541px;top:328px;width:132px;height:35px;border:4px solid #60208a;border-radius:8px"></div>
<div class="abs" style="left:633px;top:450px;width:490px;height:63px;border:4px solid #60208a;border-radius:5px"></div>
<svg class="ic" style="left:929.5px;top:92px" width="18" height="24" viewBox="0 0 18 24"><path d="M5.200,2 Q5.200,0.600 6.800,0.600 Q8.400,0.600 8.400,2 L8.400,8.200 Q8.500,7 10,7 Q11.400,7 11.400,8.600 Q11.600,7.600 12.900,7.700 Q14.300,7.800 14.300,9.400 Q14.600,8.600 15.700,8.800 Q17,9 17,10.600 L17,16 Q17,19 15.500,21 Q14.500,23.400 11,23.400 L9.500,23.400 Q6.500,23.400 5,21 L1.200,15.500 Q0.200,13.800 1.400,13 Q2.600,12.300 3.800,13.600 L5.200,15.200 Z" fill="#fff" stroke="#1b2536" stroke-width="1.300" stroke-linejoin="round"/><path d="M8.400,8.200V12.500M11.400,8.600V12.500M14.300,9.400V12.500" stroke="#1b2536" stroke-width="1.200" fill="none"/></svg>
<svg class="ic" style="left:923.5px;top:481.5px" width="18" height="24" viewBox="0 0 18 24"><path d="M5.200,2 Q5.200,0.600 6.800,0.600 Q8.400,0.600 8.400,2 L8.400,8.200 Q8.500,7 10,7 Q11.400,7 11.400,8.600 Q11.600,7.600 12.900,7.700 Q14.300,7.800 14.300,9.400 Q14.600,8.600 15.700,8.800 Q17,9 17,10.600 L17,16 Q17,19 15.500,21 Q14.500,23.400 11,23.400 L9.500,23.400 Q6.500,23.400 5,21 L1.200,15.500 Q0.200,13.800 1.400,13 Q2.600,12.300 3.800,13.600 L5.200,15.200 Z" fill="#fff" stroke="#1b2536" stroke-width="1.300" stroke-linejoin="round"/><path d="M8.400,8.200V12.500M11.400,8.600V12.500M14.300,9.400V12.500" stroke="#1b2536" stroke-width="1.200" fill="none"/></svg>
</body></html>
